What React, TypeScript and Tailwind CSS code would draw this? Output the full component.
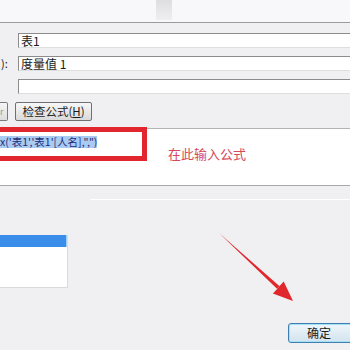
export default function App() {
  return (
    <div className="relative w-[350px] h-[350px] overflow-hidden bg-[#f0eff1] font-['Noto_Sans_CJK_SC','Liberation_Sans',sans-serif] text-[12px] text-[#1a1a1a]">
      {/* top strip */}
      <div className="relative h-[23px] bg-[#f8f8fa] border-b border-[#9b9b9b]">
        <div className="absolute left-[156px] top-0 w-[16px] h-[20px] bg-gradient-to-b from-[#dedee0] to-[#efeff1]" />
      </div>

      {/* rows of textboxes */}
      <div className="flex flex-col gap-[8px] pt-[10px]">
        <div className="flex items-center h-[15px]">
          <div className="w-[18px]" />
          <div className="flex-1 h-[15px] bg-white border-t border-l border-[#8c8c8c] border-b border-b-[#dedede] pl-[2px] leading-[13px]">表1</div>
        </div>
        <div className="flex items-center h-[15px]">
          <div className="w-[18px] text-[11px] leading-[15px] pl-[1px]">):</div>
          <div className="flex-1 h-[15px] bg-white border-t border-l border-[#8c8c8c] border-b border-b-[#dedede] pl-[2px] leading-[13px]">度量值 1</div>
        </div>
        <div className="flex items-center h-[15px]">
          <div className="w-[18px]" />
          <div className="flex-1 h-[15px] bg-white border-t border-l border-[#8c8c8c] border-b border-b-[#dedede]" />
        </div>
      </div>

      {/* buttons */}
      <div className="flex items-center gap-[7px] mt-[8px] h-[19px]">
        <div className="w-[8px] h-[19px] bg-gradient-to-b from-[#f6f6f6] to-[#dcdcdc] border border-l-0 border-[#7a7a7a] rounded-r-[2px] text-[9px] text-[#999] leading-[17px] overflow-hidden">r</div>
        <div className="w-[77px] h-[19px] bg-gradient-to-b from-[#f7f7f7] to-[#dadada] border border-[#707070] rounded-[2px] text-[11.5px] leading-[17px] text-center">
          检查公式(<span className="underline">H</span>)
        </div>
      </div>

      {/* formula panel */}
      <div className="mt-[7px] h-[58px] bg-white border-t border-[#b4b4b4] border-b border-b-[#a8a8a8] pt-[5px]">
        <div className="flex h-[12px] mt-[2px]">
          <span className="bg-[#a9cbf2] text-[#1e2a78] text-[10.5px] leading-[12px] whitespace-pre">x('表1','表1'[人名],",")</span>
        </div>
      </div>

      {/* group box line */}
      <div className="ml-[90px] mt-[13px] h-[1px] bg-[#c8c8c8] border-b border-white" />

      {/* list box */}
      <div className="mt-[35px] w-[68px] h-[53px] bg-white border-r border-b border-[#dadada]">
        <div className="h-[12px] bg-[#3a8ee9] border-r border-[#9fd0ff]" />
      </div>

      {/* OK button */}
      <div className="absolute left-[288px] top-[323px] w-[70px] h-[20px] rounded-[3px] border border-[#3d7fb0] bg-gradient-to-b from-[#eef6fb] to-[#d3e3ee] shadow-[inset_0_0_0_1px_#a6e0f5] text-[12px] leading-[18px] pl-[18px]">
        确定
      </div>

      {/* red annotation box */}
      <div className="absolute left-[-6px] top-[127px] w-[153px] h-[34px] border-[5px] border-[#e2262e]" />

      {/* red annotation text */}
      <div className="absolute left-[168px] top-[146px] text-[13px] leading-[16px] text-[#d4495b]">在此输入公式</div>

      {/* red arrow */}
      <svg className="absolute left-0 top-0" width="350" height="350" viewBox="0 0 350 350">
        <polygon
          points="219,233 279.6,286.2 272.9,293.4 293,301 283.7,281.6 277.0,288.8"
          fill="#e0282c"
        />
      </svg>
    </div>
  );
}
